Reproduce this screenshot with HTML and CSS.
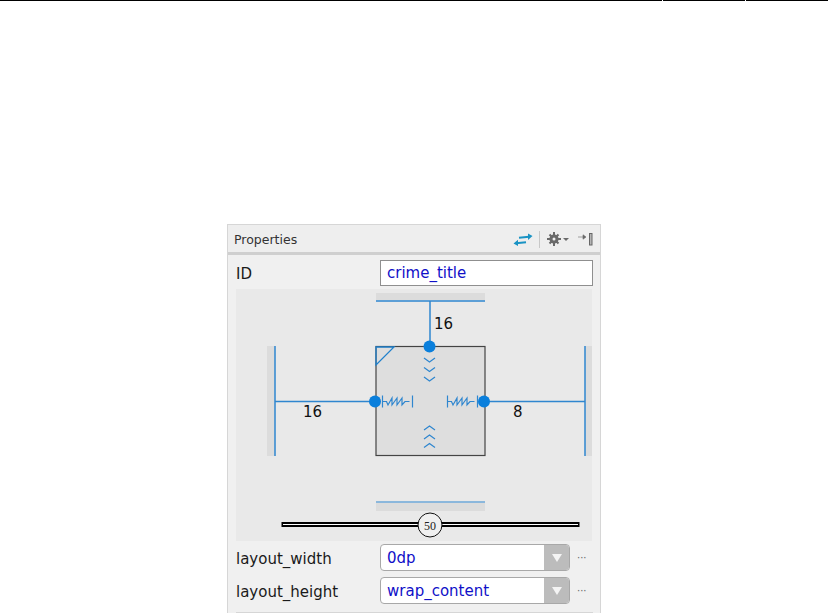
FILE: index.html
```html
<!DOCTYPE html>
<html lang="en">
<head>
<meta charset="utf-8">
<title>Properties</title>
<link rel="stylesheet" href="styles.css">
</head>
<body>
<div class="topline"><span class="seg seg-a"></span><span class="seg seg-b"></span><span class="seg seg-c"></span></div>
<main class="panel">
  <header class="panel-head">
    <span class="panel-title">Properties</span>
    <div class="tools">
      <svg class="ic-swap" width="20" height="14" viewBox="0 -1 20 14"><path class="swap-line" d="M3 10.200 13 9.200M6 4.800 16 3.800"/><path class="swap-head" d="M5 6.800 .5 10.500 5 13zM15 .5 19.500 3 15 7z"/></svg>
      <span class="tool-sep"></span>
      <svg class="ic-gear" width="24" height="14" viewBox="0 0 24 14"><g class="gear"><circle cx="7" cy="7" r="4.600"/><path d="M6 0h2v14H6zM0 6h14v2H0zM1.800 3.200 3.200 1.800l9 9-1.400 1.400zM10.800 1.800l1.400 1.400-9 9-1.400-1.400z"/></g><circle class="gear-hole" cx="7" cy="7" r="1.500"/><path class="gear" d="M16 6h6l-3 3z"/></svg>
      <svg class="ic-pin" width="16" height="14" viewBox="0 0 16 14"><path class="pin-arrow" d="M0 5h7M5 2.800 8 5 5 7.200z"/><rect class="pin-bar" x="11.500" y="1.500" width="2.500" height="11.500"/></svg>
    </div>
  </header>
  <div class="panel-body">
    <div class="id-row">
      <span class="label id-label">ID</span>
      <div class="id-field">crime_title</div>
    </div>
    <svg class="inspector" width="356" height="252" viewBox="236 289 356 252">
      <rect class="band" x="376" y="293" width="109" height="7"/>
      <rect class="band" x="267" y="346" width="8" height="110"/>
      <rect class="band" x="585" y="346" width="8" height="110"/>
      <rect class="band" x="376" y="503" width="109" height="8"/>
      <path class="line" d="M376 301h109M430 301v45M275 346v110M585 346v110M275 401.500h100M485 401.500h100"/>
      <path class="line-thin" d="M376 502h109"/>
      <rect class="box" x="376" y="346.500" width="109" height="109"/>
      <path class="corner" d="M376 365V347h18z"/>
      <path class="spring" d="M424 358l5.500 4 5.500-4M424 367.500l5.500 4 5.500-4M424 377l5.500 4 5.500-4M424 430l5.500-4 5.500 4M424 439l5.500-4 5.500 4M424 447.500l5.500-4 5.500 4"/>
      <path class="spring" d="M382.500 395.500v12M412.500 395.500v12M382.500 401.500h4l1.500 3.500 4-7v7l5-7v7l5-7v7l3-3.500h4.500M447.500 395.500v12M477.500 395.500v12M447.500 401.500h4l1.500 3.500 4-7v7l5-7v7l5-7v7l3-3.500h4.500"/>
      <circle class="dot" cx="429.500" cy="346.500" r="6"/>
      <circle class="dot" cx="375" cy="401.500" r="6"/>
      <circle class="dot" cx="484" cy="401.500" r="6"/>
      <text class="dim" x="434" y="329">16</text>
      <text class="dim" x="303" y="417">16</text>
      <text class="dim" x="513" y="417">8</text>
      <rect class="track" x="282.500" y="523" width="296" height="3"/>
      <circle class="thumb" cx="430" cy="525" r="12"/>
      <text class="thumb-text" x="430" y="529.500">50</text>
    </svg>
    <div class="prop-row">
      <span class="label">layout_width</span>
      <div class="select"><span class="select-value">0dp</span><span class="select-btn"><svg width="10" height="8" viewBox="0 0 10 8"><path class="arrow" d="M0 0h10L5 8z"/></svg></span></div>
      <span class="more">···</span>
    </div>
    <div class="prop-row">
      <span class="label">layout_height</span>
      <div class="select"><span class="select-value">wrap_content</span><span class="select-btn"><svg width="10" height="8" viewBox="0 0 10 8"><path class="arrow" d="M0 0h10L5 8z"/></svg></span></div>
      <span class="more">···</span>
    </div>
    <div class="bottom-rule"></div>
  </div>
</main>
</body>
</html>
```
FILE: styles.css
```css
* { box-sizing: border-box; }
html, body { margin: 0; padding: 0; height: 613px; overflow: hidden; background: #fff; }
body { font-family: "DejaVu Sans", "Open Sans", sans-serif; color: #111; }

.topline { display: flex; height: 1px; gap: 1px; }
.seg { background: #000; height: 1px; display: block; }
.seg-a { width: 662px; }
.seg-b { width: 82px; }
.seg-c { flex: 1; }

.panel {
  width: 374px;
  height: 389px;
  margin: 223px 0 0 227px;
  border: 1px solid #d6d6d6;
  border-bottom: 0;
  background: #f0f0f0;
  display: flex;
  flex-direction: column;
}
.panel-head {
  height: 30px;
  flex: none;
  padding: 1px 7px 0 6px;
  display: flex;
  align-items: center;
  justify-content: space-between;
  background: #eeeeee;
  border-bottom: 3px solid #cfcfcf;
}
.panel-title { font-size: 12.5px; color: #333; }
.tools { display: flex; align-items: center; }
.tools svg { display: block; }
.ic-swap { margin-right: 6px; }
.tool-sep { width: 1px; height: 17px; background: #c8c8c8; margin-right: 7px; }
.ic-gear { margin-right: 7px; }
.ic-pin { margin-right: -1px; }
.swap-line { fill: none; stroke: #1a93c4; stroke-width: 2; }
.swap-head { fill: #1a93c4; }
.gear { fill: #6a6a6a; }
.gear-hole { fill: #efefef; }
.pin-arrow { fill: #6a6a6a; stroke: #6a6a6a; stroke-width: .6; }
.pin-bar { fill: #b5b5b5; stroke: #666; stroke-width: 1; }

.panel-body { flex: 1; display: flex; flex-direction: column; padding: 0 7px 0 8px; }
.id-row { display: flex; align-items: center; height: 34px; flex: none; padding-top: 2px; }
.label { font-size: 15px; color: #1a1a1a; width: 144px; flex: none; padding-top: 2px; }
.id-field {
  width: 213px;
  height: 26px;
  border: 1px solid #8f8f8f;
  background: #fff;
  color: #1010c8;
  font-size: 15px;
  line-height: 25px;
  padding-left: 6px;
}

.inspector { display: block; flex: none; background: #e9e9e9; }
.band { fill: #dcdcdc; }
.line { fill: none; stroke: #2f86cf; stroke-width: 1.500; }
.line-thin { fill: none; stroke: #2f86cf; stroke-width: 1; }
.box { fill: #dedede; stroke: #444; stroke-width: 1.200; }
.corner { fill: none; stroke: #1f80cc; stroke-width: 1.300; }
.spring { fill: none; stroke: #2f86cf; stroke-width: 1.200; }
.dot { fill: #0a7fdc; }
.dim { font-size: 15px; fill: #111; }
.track { fill: #fff; stroke: #000; stroke-width: 2; }
.thumb { fill: #f0f0f0; stroke: #111; stroke-width: 1; }
.thumb-text { font-family: "Liberation Serif", serif; font-size: 12px; text-anchor: middle; fill: #222; }

.prop-row { display: flex; align-items: center; height: 27px; flex: none; margin-top: 3px; }
.prop-row + .prop-row { margin-top: 6px; }
.select {
  width: 190px;
  height: 27px;
  display: flex;
  border: 1px solid #a8a8a8;
  border-radius: 4px;
  background: #fff;
  overflow: hidden;
}
.select-value { flex: 1; font-size: 15px; line-height: 26px; padding-left: 6px; color: #1010c8; }
.select-btn { width: 25px; background: #bcbcbc; display: flex; align-items: center; justify-content: center; }
.select-btn svg { display: block; }
.arrow { fill: #f4f4f4; }
.more { font-size: 10px; color: #666; margin-left: 7px; line-height: 1; }
.bottom-rule { height: 1px; background: #d6d6d6; margin-top: 8px; }
```
